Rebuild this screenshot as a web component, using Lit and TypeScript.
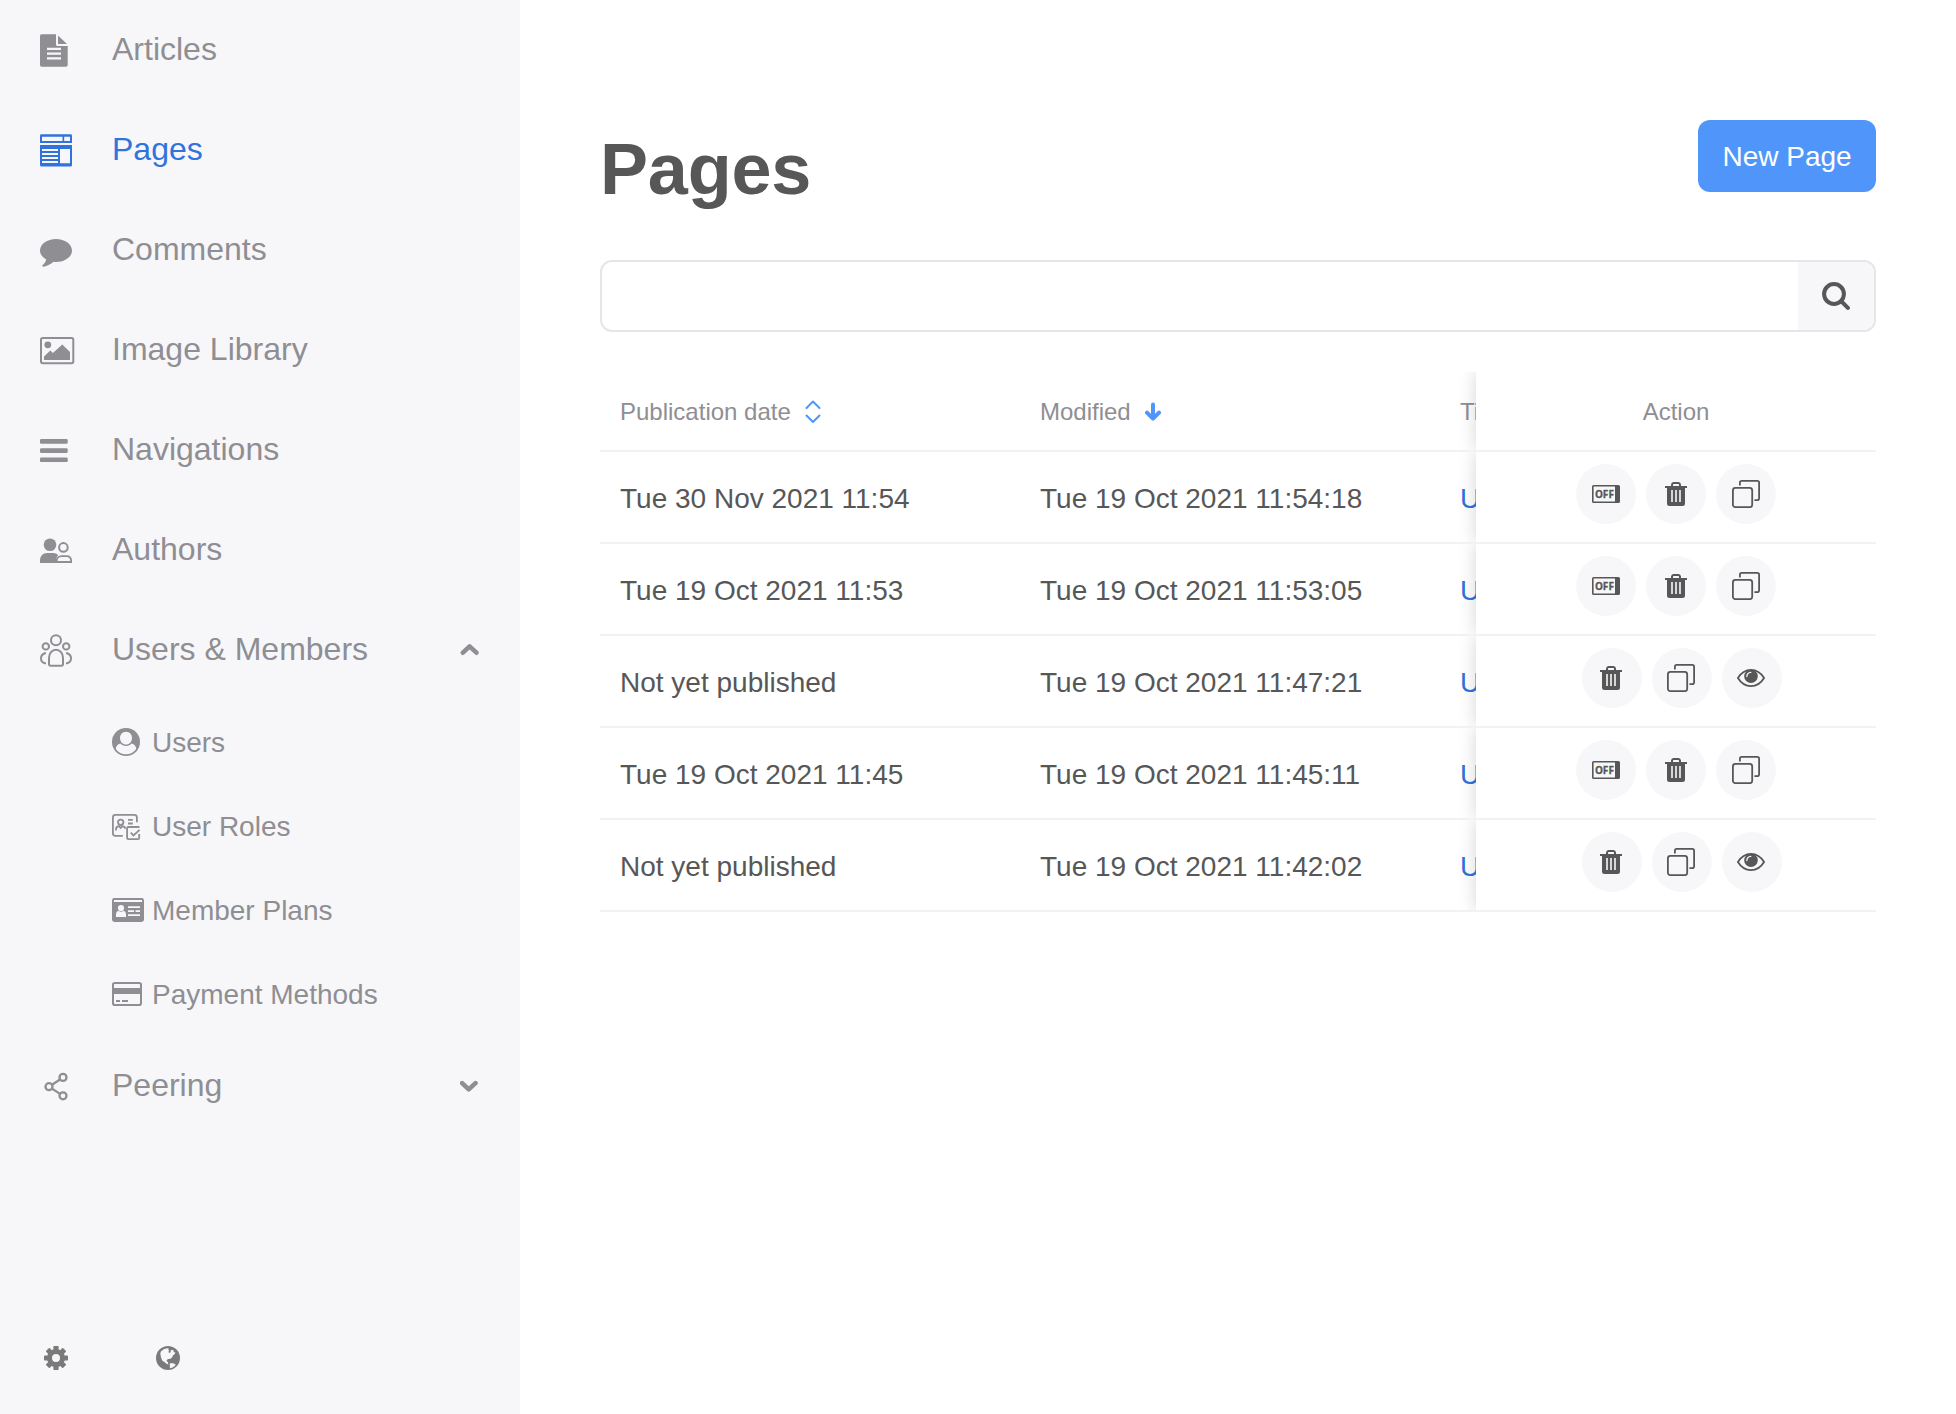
import { LitElement, html, svg, css } from "lit";
import { customElement, property } from "lit/decorators.js";
import { classMap } from "lit/directives/class-map.js";

const BG = "#f7f7fa";

// Navigation glyphs are drawn on a 36x36 grid, submenu glyphs on 32x32.
const icons: Record<string, { w: number; h: number; body: unknown }> = {
  articles: {
    w: 36, h: 36,
    body: svg`<path fill="currentColor" d="M1.6 2.2H16v10.3q0 1.5 1.5 1.5h10.2v19q0 1.7-1.7 1.7H1.7Q0 34.7 0 33V3.8q0-1.6 1.6-1.6z"/>
      <path fill="currentColor" d="M18 3.4l9 8.6h-9z"/>
      <path fill=${BG} d="M7 15.8h14V18H7zM7 20.5h14v2.2H7zM7 25.2h14v2.2H7z"/>`,
  },
  pages: {
    w: 36, h: 36,
    body: svg`<path fill="currentColor" fill-rule="evenodd" d="M1.4 2.3h29.2q1.4 0 1.4 1.4V11H0V3.700q0-1.400 1.400-1.400zM2 4.700V9h20.500V4.700zM24.200 4.700V9H30V4.700z
      M0 13h32v20q0 1.500-1.500 1.500h-29Q0 34.500 0 33zM2 17v2h16v-2zM2 21v2h16v-2zM2 25v2h16v-2zM2 29v2h16v-2zM20 17v14.200h10V17z"/>`,
  },
  comments: {
    w: 36, h: 36,
    body: svg`<path fill="currentColor" d="M16 7c8.800 0 16 5.100 16 11.500S24.800 30 16 30c-.9 0-1.800-.1-2.600-.2-2.400 2.200-6 4.400-10 4.900-.8.1-1.500-.6-1-1.400 1.700-1.600 3.300-3.300 3.800-5.900C2.400 25.300 0 22.100 0 18.500 0 12.100 7.200 7 16 7z"/>`,
  },
  images: {
    w: 36, h: 36,
    body: svg`<rect x="1" y="6" width="32.300" height="25.300" rx="1.800" fill="none" stroke="currentColor" stroke-width="2"/>
      <circle cx="7.800" cy="12.800" r="3.400" fill="currentColor"/>
      <path fill="currentColor" d="M4 28v-3.600l6.300-5.800 2.600 2.400 9.400-8.500L30 20v8z"/>`,
  },
  bars: {
    w: 36, h: 36,
    body: svg`<g fill="currentColor"><rect y="7" width="27.700" height="4.700" rx="1.200"/><rect y="16.200" width="27.700" height="4.700" rx="1.200"/><rect y="25.400" width="27.700" height="4.700" rx="1.200"/></g>`,
  },
  authors: {
    w: 36, h: 36,
    body: svg`<circle cx="10" cy="12.800" r="6.300" fill="currentColor"/>
      <path fill="currentColor" d="M0 31v-2.500C0 24 3 21 7 21h6c2.200 0 4 .8 5.200 2.200-1.500 1.300-2.200 3.300-2.200 5.300V31z"/>
      <circle cx="23.400" cy="15.400" r="4.300" fill="none" stroke="currentColor" stroke-width="2"/>
      <path fill="none" stroke="currentColor" stroke-width="1.900" d="M16.700 30h14.400v-1.200c0-2.800-1.900-4.700-4.600-4.700h-5c-2.600 0-4.800 2-4.800 4.700z"/>`,
  },
  members: {
    w: 36, h: 36,
    body: svg`<g fill="none" stroke="currentColor" stroke-width="2"><circle cx="16" cy="8.300" r="5"/><circle cx="5.800" cy="14.400" r="3.200"/><circle cx="26.200" cy="14.400" r="3.200"/>
      <path d="M9 32v-6.200c0-4.500 3-8 7-8s7 3.500 7 8V32q0 1.700-1.700 1.700H10.700Q9 33.700 9 32z"/>
      <path d="M6 21.300H4.800C2.500 22.200 1 24 1 26.300c0 2.600 2 4.800 5 5.200M26 21.300h1.200c2.300.9 3.800 2.700 3.800 5 0 2.600-2 4.800-5 5.200"/></g>`,
  },
  share: {
    w: 36, h: 36,
    body: svg`<g fill="none" stroke="currentColor" stroke-width="2.300"><circle cx="9" cy="18.700" r="3.500"/><circle cx="23" cy="9.400" r="3.500"/><circle cx="23" cy="27.800" r="3.500"/><path d="M12 16.800l8-5.300M12 20.600l8 5.300"/></g>`,
  },
  user: {
    w: 32, h: 32,
    body: svg`<circle cx="14" cy="16" r="14" fill="currentColor"/>
      <path fill=${BG} d="M14 5.700c3.500 0 6 2.800 6 6.300 0 3.700-2.600 6.600-6 6.600S8 15.700 8 12c0-3.500 2.500-6.300 6-6.300z"/>
      <path fill=${BG} d="M8.300 17.600c1.500 1.600 3.400 2.500 5.700 2.500s4.200-.9 5.700-2.500c2.700.7 4.400 2.600 4.500 5.300C21.800 26.200 18.200 28.300 14 28.300S6.200 26.200 3.800 22.900c.1-2.700 1.800-4.600 4.500-5.300z"/>`,
  },
  roles: {
    w: 32, h: 32,
    body: svg`<g fill="none" stroke="currentColor" stroke-width="1.800"><path d="M10.800 25.800H3.400Q.9 25.800.9 23.300V7.300q0-2.500 2.500-2.500h19q2.500 0 2.500 2.500v4.900"/>
      <circle cx="8.700" cy="12.300" r="2.700"/><path d="M4 20.600v-1.400q0-2.400 2.800-3l1.900 1.800 1.900-1.800q2.400.5 3 2.600"/><path d="M16 9.900h4.800M16 13.500h4.800"/>
      <path d="M27.500 17H16.300q-1.200 0-1.200 1.200v9.700q0 1.200 1.200 1.200h9.700q1.200 0 1.200-1.200V24M18.800 22.700l2.600 2.700 6.200-5.500"/></g>`,
  },
  plans: {
    w: 32, h: 32,
    body: svg`<rect y="4" width="32" height="24" rx="2.400" fill="currentColor"/>
      <g fill=${BG}><path d="M2 6h28v2H2zM16 12.200h12v1.700H16zM16 16.200h6v1.700h-6zM23.500 16.200H28v1.700h-4.500zM16 20.300h12V22H16z"/><circle cx="9" cy="14" r="3.100"/><path d="M4 23v-2.400c0-2.200 1-3.600 2.600-3.900.7.7 1.500 1 2.400 1s1.700-.3 2.400-1c1.600.3 2.600 1.700 2.600 3.900V23z"/></g>`,
  },
  payment: {
    w: 32, h: 32,
    body: svg`<rect x="1" y="5" width="28" height="22" rx="1.800" fill="none" stroke="currentColor" stroke-width="2"/>
      <path fill="currentColor" d="M1 10h28v6H1zM4 22h4v2H4zM10 22h6v2h-6z"/>`,
  },
  up: {
    w: 20, h: 14,
    body: svg`<path fill="none" stroke="currentColor" stroke-width="4.600" stroke-linecap="round" stroke-linejoin="round" d="M2.900 9.700L9.600 3.300l6.800 6.400"/>`,
  },
  down: {
    w: 20, h: 14,
    body: svg`<path fill="none" stroke="currentColor" stroke-width="4.600" stroke-linecap="round" stroke-linejoin="round" d="M2.100 4.100l6.600 6.300 6.800-6.300"/>`,
  },
  gear: {
    w: 24, h: 24,
    body: svg`<g fill="currentColor">${[0, 45, 90, 135].map(
      (a) => svg`<rect x="9.400" y="0" width="5.200" height="5" rx=".8" transform="rotate(${a} 12 12)"/><rect x="9.400" y="19" width="5.200" height="5" rx=".8" transform="rotate(${a} 12 12)"/>`
    )}<path fill-rule="evenodd" d="M12 2.900a9.100 9.100 0 1 0 0 18.200 9.100 9.100 0 0 0 0-18.200zM12 8a4 4 0 1 1 0 8 4 4 0 0 1 0-8z"/></g>`,
  },
  globe: {
    w: 24, h: 24,
    body: svg`<circle cx="12" cy="12" r="12" fill="currentColor"/>
      <path fill=${BG} d="M4.300 7.500L5 5.200 8.200 3l3.300-.8 1.500.6-.8 1 1 1-.9 1.100 1.300 1.100 1.200-.9-.3-1.600 1.800-.8 1.200.8.300 1.400 1.700.8-1 1.500-1.600 1.200-.9 2.200-1.500 1.200-2.300.2-1.500 1.100.1 1.500 1.400.4-.5 1.300 1.200 1.200-2.200-.4-2.300-2.100-2.200-1.600-1.200-2.800z"/>
      <path fill=${BG} d="M13.800 17.500l2.200-.4 3.600 1.100-.8 1.900-2.300 1.300-2.600.9z"/>`,
  },
  search: {
    w: 28, h: 28,
    body: svg`<g fill="none" stroke="currentColor"><circle cx="12" cy="12" r="9.900" stroke-width="4"/><path d="M19.500 19.500l6.400 6.400" stroke-width="4" stroke-linecap="round"/></g>`,
  },
  sort: {
    w: 16, h: 24,
    body: svg`<path fill="none" stroke="currentColor" stroke-width="2" stroke-linecap="round" stroke-linejoin="round" d="M1.500 8L8 1.500 14.500 8M1.500 15.500L8 22l6.500-6.500"/>`,
  },
  sortDown: {
    w: 18, h: 20,
    body: svg`<path fill="none" stroke="currentColor" stroke-width="4" stroke-linecap="round" stroke-linejoin="round" d="M8 2.500v13.500M2 10.700l6 6 6-6"/>`,
  },
  off: {
    w: 28, h: 18,
    body: svg`<rect x=".8" y=".8" width="26.400" height="16.400" rx=".8" fill="none" stroke="currentColor" stroke-width="1.600"/><path fill="currentColor" d="M23 1h4.500v16H23z"/>
      <text x="2.900" y="13" textLength="19" lengthAdjust="spacingAndGlyphs" class="off">OFF</text>`,
  },
  trash: {
    w: 22, h: 24,
    body: svg`<path fill="currentColor" fill-rule="evenodd" d="M0 4h6V2.500Q6.300 0 8.500 0h5Q15.700 0 16 2.500V4h6v2h-2v15.500q0 2.500-2.500 2.500h-13Q2 24 2 21.500V6H0zM8 4h6V2.800q0-.8-.8-.8H8.800Q8 2 8 2.800zM6.200 8v12h1.600V8zM10.200 8v12h1.600V8zM14.200 8v12h1.600V8z"/>`,
  },
  copy: {
    w: 28, h: 28,
    body: svg`<g fill="none" stroke="currentColor" stroke-width="1.800"><rect x=".9" y="7.900" width="19.300" height="19.300" rx="2.500"/><path d="M7.900 5.600V2.800Q7.900.9 9.800.9h15.400q1.900 0 1.900 1.900v15.400q0 1.900-1.900 1.900h-2.800"/></g>`,
  },
  eye: {
    w: 28, h: 18,
    body: svg`<path fill="none" stroke="currentColor" stroke-width="1.800" stroke-linejoin="round" d="M.9 9C4 4 8.800.9 14 .9S24 4 27.100 9c-3.100 5-7.900 8.100-13.100 8.100S4 14 .9 9z"/>
      <circle cx="14" cy="7.300" r="6.800" fill="currentColor"/><path fill="none" stroke=${BG} stroke-width="1.300" stroke-linecap="round" d="M9.900 7.500c0-2.400 1.500-4 3.900-4.200"/>`,
  },
};

@customElement("ui-icon")
class UiIcon extends LitElement {
  static styles = css`
    :host { display: block; flex: none; }
    svg { display: block; }
    .off { font: bold 11px "Open Sans", "Noto Sans", sans-serif; fill: currentColor; stroke: currentColor; stroke-width: 0.3px; }
  `;
  @property() name = "";
  render() {
    const i = icons[this.name];
    return html`<svg width=${i.w} height=${i.h} viewBox="0 0 ${i.w} ${i.h}">${i.body}</svg>`;
  }
}

interface NavItem { icon: string; label: string; active?: boolean; arrow?: string; children?: NavItem[]; }

const nav: NavItem[] = [
  { icon: "articles", label: "Articles" },
  { icon: "pages", label: "Pages", active: true },
  { icon: "comments", label: "Comments" },
  { icon: "images", label: "Image Library" },
  { icon: "bars", label: "Navigations" },
  { icon: "authors", label: "Authors" },
  {
    icon: "members", label: "Users & Members", arrow: "up",
    children: [
      { icon: "user", label: "Users" },
      { icon: "roles", label: "User Roles" },
      { icon: "plans", label: "Member Plans" },
      { icon: "payment", label: "Payment Methods" },
    ],
  },
  { icon: "share", label: "Peering", arrow: "down" },
];

@customElement("app-sidebar")
class AppSidebar extends LitElement {
  static styles = css`
    :host {
      display: flex; flex-direction: column; box-sizing: border-box;
      width: 520px; flex: none; background: #f7f7fa; color: #8e8e93;
    }
    .item { display: flex; align-items: center; height: 100px; padding: 0 40px; font-size: 32px; line-height: 36px; }
    .item.active { color: #3272dc; }
    .glyph { width: 72px; flex: none; }
    .label { flex: 1; padding-bottom: 2px; white-space: nowrap; }
    .sub { display: flex; align-items: center; height: 84px; padding-left: 112px; gap: 8px; font-size: 28px; line-height: 32px; }
    .sub-label { padding-top: 2px; }
    .foot { margin-top: auto; display: flex; gap: 88px; padding: 0 44px 44px; color: #7a7a7a; }
  `;
  render() {
    return html`
      <nav>
        ${nav.map((n) => html`
          <div class=${classMap({ item: true, active: !!n.active })}>
            <span class="glyph"><ui-icon name=${n.icon}></ui-icon></span>
            <span class="label">${n.label}</span>
            ${n.arrow ? html`<ui-icon name=${n.arrow}></ui-icon>` : ""}
          </div>
          ${(n.children ?? []).map((c) => html`<div class="sub"><ui-icon name=${c.icon}></ui-icon><span class="sub-label">${c.label}</span></div>`)}
        `)}
      </nav>
      <div class="foot"><ui-icon name="gear"></ui-icon><ui-icon name="globe"></ui-icon></div>
    `;
  }
}

const rows = [
  { published: "Tue 30 Nov 2021 11:54", modified: "Tue 19 Oct 2021 11:54:18" },
  { published: "Tue 19 Oct 2021 11:53", modified: "Tue 19 Oct 2021 11:53:05" },
  { published: "", modified: "Tue 19 Oct 2021 11:47:21" },
  { published: "Tue 19 Oct 2021 11:45", modified: "Tue 19 Oct 2021 11:45:11" },
  { published: "", modified: "Tue 19 Oct 2021 11:42:02" },
];

@customElement("pages-table")
class PagesTable extends LitElement {
  static styles = css`
    :host { display: block; font-size: 28px; line-height: 40px; color: #575757; }
    .row {
      display: grid; grid-template-columns: 420px 420px 36px 400px; box-sizing: border-box;
      height: 92px; border-bottom: 2px solid #f2f2f5; overflow: hidden; white-space: nowrap;
    }
    .cell { padding: 27px 0 0 20px; min-width: 0; }
    .clip { overflow: hidden; }
    .link { color: #3272dc; }
    .action { background: #fff; box-shadow: 0 0 16px 1px rgba(9, 9, 9, 0.15); display: flex; justify-content: center; gap: 10px; padding-top: 12px; }
    .head { height: 80px; font-size: 24px; line-height: 34px; color: #8e8e93; }
    .head .cell { display: flex; align-items: center; padding: 2px 0 0 20px; }
    .head .action { align-items: center; padding: 2px 0 0; }
    .sort { color: #4f95fb; margin-left: 14px; }
    .btn { width: 60px; height: 60px; border-radius: 50%; background: #f7f7fa; display: grid; place-items: center; }
    .draft { padding-left: 12px; }
    .draft .btn { box-sizing: border-box; padding-right: 2px; }
  `;
  render() {
    return html`
      <div class="row head">
        <div class="cell">Publication date<ui-icon class="sort" name="sort"></ui-icon></div>
        <div class="cell">Modified<ui-icon class="sort" name="sortDown"></ui-icon></div>
        <div class="cell clip">Title</div>
        <div class="action">Action</div>
      </div>
      ${rows.map((r) => html`
        <div class="row">
          <div class="cell">${r.published || "Not yet published"}</div>
          <div class="cell">${r.modified}</div>
          <div class="cell clip link">Untitled</div>
          <div class=${classMap({ action: true, draft: !r.published })}>
            ${(r.published ? ["off", "trash", "copy"] : ["trash", "copy", "eye"]).map(
              (n) => html`<div class="btn"><ui-icon name=${n}></ui-icon></div>`
            )}
          </div>
        </div>`)}
    `;
  }
}

@customElement("app-root")
class AppRoot extends LitElement {
  static styles = css`
    :host {
      display: flex; height: 100vh; overflow: hidden; background: #fff;
      font-family: "Liberation Sans", Arial, sans-serif; color: #575757;
    }
    main { flex: 1; min-width: 0; padding: 120px 80px 0; }
    .top { display: flex; justify-content: space-between; align-items: flex-start; height: 140px; }
    h1 { margin: 0; font-size: 72px; line-height: 98px; font-weight: 700; letter-spacing: -0.2px; }
    .new {
      box-sizing: border-box; width: 178px; height: 72px; border-radius: 12px; text-align: center;
      background: #5096fa; color: #fff; font-size: 28px; line-height: 74px;
    }
    .search { display: flex; box-sizing: border-box; height: 72px; border: 2px solid #e5e5ea; border-radius: 12px; overflow: hidden; margin-bottom: 40px; }
    .field { flex: 1; }
    .go { width: 76px; background: #f7f7fa; display: grid; place-items: center; }
  `;
  render() {
    return html`
      <app-sidebar></app-sidebar>
      <main>
        <div class="top"><h1>Pages</h1><div class="new">New Page</div></div>
        <div class="search"><div class="field"></div><div class="go"><ui-icon name="search"></ui-icon></div></div>
        <pages-table></pages-table>
      </main>
    `;
  }
}
